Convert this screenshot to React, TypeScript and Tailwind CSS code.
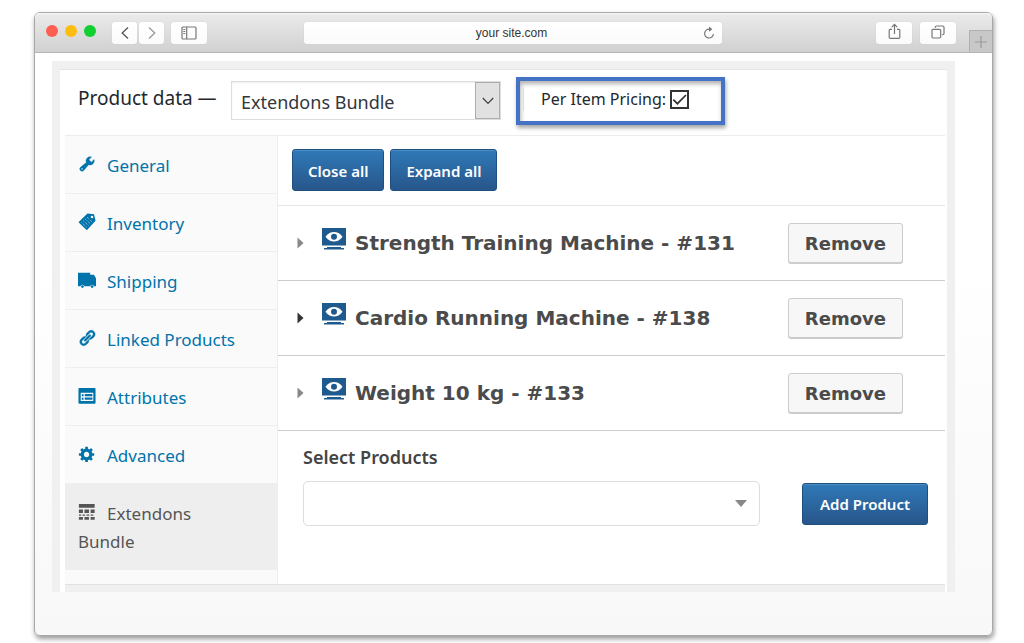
import type { ReactNode } from "react";
import { clsx } from "clsx";

const toolButton =
  "flex h-[22px] items-center justify-center rounded-[3px] bg-linear-to-b from-white to-[#fbfbfb] text-[#777] shadow-[0_0_1px_rgba(0,0,0,0.15)]";

const blueButton =
  "h-[42px] rounded-[3px] border border-[#1d4f80] bg-linear-to-b from-[#3079b8] to-[#27568a] pt-[2px] text-[15px] font-semibold whitespace-nowrap text-white shadow-[inset_0_1px_0_#4a8cc4]";

function Icon({ children }: { children: ReactNode }) {
  return (
    <svg viewBox="0 0 20 20" fill="currentColor" className="mt-[3px] mr-[11px] h-[18px] w-[18px] shrink-0" aria-hidden="true">
      {children}
    </svg>
  );
}

const WrenchIcon = () => (
  <Icon>
    <path d="M16.68 9.77c-1.34 1.34-3.3 1.67-4.95.99l-5.41 6.52c-.99.99-2.59.99-3.58 0s-.99-2.59 0-3.57l6.52-5.42c-.68-1.65-.35-3.61.99-4.95 1.28-1.28 3.12-1.62 4.72-1.06l-2.89 2.89 2.82 2.82 2.86-2.87c.53 1.58.18 3.39-1.08 4.65zM3.81 16.21c.4.39 1.04.39 1.43 0 .4-.4.4-1.04 0-1.43-.39-.4-1.03-.4-1.43 0-.39.39-.39 1.03 0 1.43z" stroke="currentColor" strokeWidth=".5" />
  </Icon>
);

const TagIcon = () => (
  <Icon>
    <path fillRule="evenodd" d="M10.500 .5 17.800 1.500 19.500 8.500 9.800 19.300 .5 10.200zM15.500 3a1.400 1.400 0 1 0 .1 2.800 1.400 1.400 0 0 0-.1-2.800z" />
    <path d="M10 4.500l6 5.800M8 6.500l6 5.800M6 8.500l6 5.800M4 10.500l6 5.800" stroke="#fafafa" strokeWidth=".8" strokeDasharray="1.100 1.100" />
  </Icon>
);

const TruckIcon = () => (
  <Icon>
    <path d="M0 2h13.5v2.2h4.2L20 8v9h-2a2.4 2.4 0 0 0-4.6 0H7.2a2.4 2.4 0 0 0-4.6 0H0z" />
    <circle cx="4.9" cy="17.3" r="1.5" />
    <circle cx="15.7" cy="17.3" r="1.5" />
  </Icon>
);

const LinkIcon = () => (
  <Icon>
    <path d="M17.74 2.76c1.68 1.69 1.68 4.41 0 6.1l-1.53 1.52c-1.12 1.12-2.7 1.47-4.14 1.09l2.62-2.61.76-.77.76-.76c.84-.84.84-2.2 0-3.04-.84-.85-2.2-.85-3.04 0l-.77.76-3.38 3.38c-.37-1.44-.02-3.02 1.1-4.14l1.52-1.53c1.69-1.68 4.42-1.68 6.1 0zM8.59 13.43l5.34-5.34c.42-.42.42-1.1 0-1.52-.44-.43-1.13-.39-1.53 0l-5.33 5.34c-.42.42-.42 1.1 0 1.52.44.43 1.13.39 1.52 0zm-.76 2.29l4.14-4.15c.38 1.44.03 3.02-1.09 4.14l-1.52 1.53c-1.69 1.68-4.41 1.68-6.1 0-1.68-1.68-1.68-4.42 0-6.1l1.53-1.52c1.12-1.12 2.7-1.47 4.14-1.1l-4.14 4.15c-.85.84-.85 2.2 0 3.05.84.84 2.2.84 3.04 0z" stroke="currentColor" strokeWidth=".5" />
  </Icon>
);

const FeedbackIcon = () => (
  <Icon>
    <path fillRule="evenodd" d="M1.500 1h17a1 1 0 0 1 1 1v15.500a1 1 0 0 1-1 1h-17a1 1 0 0 1-1-1V2a1 1 0 0 1 1-1zM3 6.500v9h14v-9z" />
    <path d="M4.200 8h2v2.200h-2zM7.500 7.800H16v2.500H7.500zM4.200 12h2v2.200h-2zM7.500 11.800H16v2.500H7.500z" />
  </Icon>
);

const GearIcon = () => (
  <Icon>
    <path d="M18 12h-2.18c-.17.7-.44 1.35-.81 1.93l1.54 1.54-2.1 2.1-1.54-1.54c-.58.36-1.23.63-1.91.79V19H8v-2.18c-.68-.16-1.33-.43-1.91-.79l-1.54 1.54-2.12-2.12 1.54-1.54c-.36-.58-.63-1.23-.79-1.91H1V9.03h2.17c.16-.7.44-1.35.8-1.94L2.43 5.55l2.1-2.1 1.54 1.54c.58-.37 1.24-.64 1.93-.81V2h3v2.18c.68.16 1.33.43 1.91.79l1.54-1.54 2.12 2.12-1.54 1.54c.36.59.64 1.24.8 1.94H18V12zm-8.5 1.5c1.66 0 3-1.34 3-3s-1.34-3-3-3-3 1.34-3 3 1.34 3 3 3z" />
  </Icon>
);

const TableIcon = () => (
  <Icon>
    <path d="M1 1h17.500v4.200H1zM1 7.200h4.500v4H1zM7.200 7.200h5v4h-5zM14 7.200h4.500v4H14zM1 12.700h2.500v1.500H1zM5 12.700h3v1.500H5zM9.500 12.700h3v1.500h-3zM14 12.700h3v1.500h-3zM1 15.500h4.500v3H1zM7.200 15.500h5v3h-5zM14 15.500h4.500v3H14z" />
  </Icon>
);

const tabs = [
  { icon: WrenchIcon, label: "General" },
  { icon: TagIcon, label: "Inventory" },
  { icon: TruckIcon, label: "Shipping" },
  { icon: LinkIcon, label: "Linked Products" },
  { icon: FeedbackIcon, label: "Attributes" },
  { icon: GearIcon, label: "Advanced" },
  { icon: TableIcon, label: "Extendons Bundle", active: true },
];

const products = [
  { id: 131, name: "Strength Training Machine" },
  { id: 138, name: "Cardio Running Machine", current: true },
  { id: 133, name: "Weight 10 kg" },
];

function BrowserBar() {
  return (
    <header className="flex h-[40px] items-center rounded-t-[5px] border-b border-[#b5b5b5] bg-linear-to-b from-[#ebebeb] to-[#d1d1d1] pl-[11px] shadow-[inset_0_1px_0_#f6f6f6]">
      <div className="flex gap-[7px] pb-[4px]">
        <span className="h-3 w-3 rounded-full bg-[#ff5f52]" />
        <span className="h-3 w-3 rounded-full bg-[#fdbc10]" />
        <span className="h-3 w-3 rounded-full bg-[#10cf30]" />
      </div>
      <div className="ml-[16px] flex gap-[2px]">
        <button type="button" aria-label="Back" className={clsx(toolButton, "w-[25px]")}>
          <svg viewBox="0 0 8 12" className="h-3 w-2" fill="none" stroke="#555" strokeWidth="1.3">
            <path d="M7 .5 1.2 6 7 11.5" />
          </svg>
        </button>
        <button type="button" aria-label="Forward" className={clsx(toolButton, "w-[25px]")}>
          <svg viewBox="0 0 8 12" className="h-3 w-2" fill="none" stroke="#999" strokeWidth="1.3">
            <path d="M1 .5 6.8 6 1 11.5" />
          </svg>
        </button>
      </div>
      <button type="button" aria-label="Toggle sidebar" className={clsx(toolButton, "ml-[7px] w-[36px]")}>
        <svg viewBox="0 0 16 14" className="h-[14px] w-4" fill="none" stroke="currentColor" strokeWidth="1.2">
          <rect x="1" y="1" width="14" height="12" rx="1" />
          <path d="M5.7 1v12M2.3 3.5h2M2.3 5.5h2M2.3 7.5h2" />
        </svg>
      </button>
      <div className={clsx(toolButton, "mr-[154px] ml-[97px] min-w-0 flex-1 pr-[7px]")}>
        <input
          aria-label="Address"
          defaultValue="your site.com"
          className="w-full min-w-0 flex-1 pl-[16px] text-center font-['Liberation_Sans',sans-serif] text-[12px] text-[#333] outline-none"
        />
        <button type="button" aria-label="Reload">
          <svg viewBox="0 0 12 14" className="h-[14px] w-3" fill="none" stroke="currentColor" strokeWidth="1.2">
            <path d="M6.5 3.2A4.4 4.4 0 1 0 10.4 8" />
            <path d="M6 .6 9.4 3.3 6 5.8z" fill="currentColor" stroke="none" />
          </svg>
        </button>
      </div>
      <button type="button" aria-label="Share" className={clsx(toolButton, "w-[36px]")}>
        <svg viewBox="0 0 13 17" className="mb-[2px] h-[17px] w-[13px]" fill="none" stroke="currentColor" strokeWidth="1.2">
          <path d="M4 6.3H2.2a1 1 0 0 0-1 1v7a1 1 0 0 0 1 1h8.6a1 1 0 0 0 1-1v-7a1 1 0 0 0-1-1H9M6.5 11V1.5M3.8 4.2l2.7-2.8 2.7 2.8" />
        </svg>
      </button>
      <button type="button" aria-label="Show tabs" className={clsx(toolButton, "ml-[8px] w-[36px]")}>
        <svg viewBox="0 0 14 14" className="mb-[1px] h-[14px] w-[14px]" fill="none" stroke="currentColor" strokeWidth="1.2">
          <rect x="1" y="4.3" width="8.7" height="8.7" rx="1.2" />
          <path d="M4.3 2.8V2.2c0-.7.4-1.2 1.1-1.2h6.4c.7 0 1.2.5 1.2 1.2v6.3c0 .7-.5 1.2-1.2 1.2h-.5" />
        </svg>
      </button>
      <button
        type="button"
        aria-label="New tab"
        className="ml-[13px] flex h-[22px] w-[23px] items-center justify-center self-end border-t border-l border-[#b0b0b0] bg-[#c8c8c8]"
      >
        <svg viewBox="0 0 12 12" className="h-3 w-3" stroke="#999" strokeWidth="1.2">
          <path d="M6 0v12M0 6h12" />
        </svg>
      </button>
    </header>
  );
}

function ProductDataHeader() {
  return (
    <div className="flex h-[67px] items-start border-b border-[#ececec] pl-[13px] text-[#23282d]">
      <label htmlFor="product-type" className="mt-[15px] w-[153px] text-[19px] leading-[28px] whitespace-nowrap">
        Product data —
      </label>
      <div className="mt-[12px] grid w-[270px] border border-[#ddd] bg-white shadow-[inset_0_1px_2px_rgba(0,0,0,0.07)]">
        <select
          id="product-type"
          className="col-start-1 row-start-1 h-[37px] appearance-none pt-[3px] pl-[9px] text-[18px] text-[#32373c] outline-none"
        >
          <option>Extendons Bundle</option>
        </select>
        <span className="pointer-events-none col-start-1 row-start-1 flex w-[25px] items-center justify-center justify-self-end border border-[#adadad] bg-[#e1e1e1]">
          <svg viewBox="0 0 12 8" className="h-2 w-3" fill="none" stroke="#444" strokeWidth="1.3">
            <path d="M.8 1 6 6.4 11.2 1" />
          </svg>
        </span>
      </div>
      <div className="mt-[8px] ml-[15px] flex h-[48px] w-[209px] items-start border-4 border-[#4472c4] pt-[6px] pl-[3px] shadow-[1px_3px_4px_rgba(0,0,0,0.35),inset_1px_3px_4px_rgba(0,0,0,0.3)]">
        <span className="h-[24px] border-l border-[#ddd]" />
        <label className="ml-[17px] flex items-center gap-[4px] text-[16px] leading-[24px] whitespace-nowrap">
          Per Item Pricing:
          <span className="grid">
            <input
              type="checkbox"
              defaultChecked
              className="peer col-start-1 row-start-1 h-[19px] w-[19px] appearance-none border-2 border-[#333] bg-white"
            />
            <svg
              viewBox="0 0 19 19"
              className="pointer-events-none invisible col-start-1 row-start-1 h-[19px] w-[19px] peer-checked:visible"
              fill="none"
              stroke="#333"
              strokeWidth="1.7"
            >
              <path d="M3.3 9.600 7.400 13.700 16 5" />
            </svg>
          </span>
        </label>
      </div>
    </div>
  );
}

function Sidebar() {
  return (
    <nav className="w-[213px] shrink-0 border-r border-[#eee] bg-[#fafafa] pb-[14px]">
      {tabs.map((tab) => (
        <a
          key={tab.label}
          href="#"
          className={clsx(
            "block border-b border-[#eee] pt-[16px] pb-[13px] pl-[13px] text-[17px] leading-[28px]",
            tab.active ? "bg-[#eee] text-[#555]" : "text-[#0073aa]"
          )}
        >
          <span className="float-left">
            <tab.icon />
          </span>
          {tab.active ? (
            <>
              Extendons
              <br />
              <span className="clear-left block">Bundle</span>
            </>
          ) : (
            tab.label
          )}
        </a>
      ))}
    </nav>
  );
}

function ProductRow({ id, name, current }: { id: number; name: string; current?: boolean }) {
  return (
    <li className="flex h-[75px] items-center border-b border-[#ccc] pr-[42px] pl-[19px] font-['DejaVu_Sans',Verdana,sans-serif] font-bold text-[#4b4b4b]">
      <svg viewBox="0 0 7 12" className={clsx("h-3 w-[7px]", current ? "text-[#333]" : "text-[#888]")} fill="currentColor">
        <path d="M.5.5 6.5 6l-6 5.5z" />
      </svg>
      <svg viewBox="0 0 24 22" className="mb-[9px] ml-[18px] h-[22px] w-6" aria-hidden="true">
        <path d="M0 0h24v17.500H0zM5 19h14v1h3v1.500H2V20h3z" fill="#1f5a8e" />
        <path d="M3.500 8.800C6 5.300 9 4 12 4s6 1.300 8.500 4.800C18 12.300 15 13.600 12 13.600S6 12.300 3.500 8.800z" fill="#fff" />
        <circle cx="12" cy="8.800" r="3" fill="#1f5a8e" />
      </svg>
      <h3 className="ml-[9px] flex-1 text-[20px] whitespace-nowrap">
        {name} - #{id}
      </h3>
      <button
        type="button"
        className="h-[40px] rounded-[3px] border border-[#ccc] bg-[#f7f7f7] px-4 text-[18px] shadow-[0_1px_0_#ccc]"
      >
        Remove
      </button>
    </li>
  );
}

export default function App() {
  return (
    <div className="bg-white pt-3 pr-[31px] pb-2 pl-[34px] font-['Noto_Sans','Open_Sans',sans-serif]">
      <div className="rounded-[6px] border border-[#a8a8a8] bg-linear-to-b from-white from-40% to-[#f8f8f8] shadow-[1px_3px_5px_rgba(0,0,0,0.4)]">
        <BrowserBar />
        <main className="pt-2 pr-[37px] pb-[43px] pl-[17px]">
          <div className="border-x-8 border-t-8 border-[#f0f0f0] bg-white pr-[2px] pl-[5px] shadow-[inset_0_1px_0_#e5e5e5]">
            <ProductDataHeader />
            <div className="flex">
              <Sidebar />
              <section className="min-w-0 flex-1">
                <div className="flex h-[70px] items-start gap-[6px] border-b border-[#e5e5e5] pt-[13px] pl-[14px]">
                  <button type="button" className={clsx(blueButton, "px-[15px]")}>
                    Close all
                  </button>
                  <button type="button" className={clsx(blueButton, "px-[15px]")}>
                    Expand all
                  </button>
                </div>
                <ul>
                  {products.map((product) => (
                    <ProductRow key={product.id} {...product} />
                  ))}
                </ul>
                <div className="pt-[12px] pr-[17px] pl-[25px]">
                  <label htmlFor="products" className="text-[18px] leading-[28px] font-semibold text-[#444]">
                    Select Products
                  </label>
                  <div className="mt-[10px] flex items-center gap-[42px]">
                    <div className="grid flex-1 rounded-[5px] border border-[#ddd] bg-white">
                      <select id="products" className="col-start-1 row-start-1 h-[43px] appearance-none px-3 outline-none">
                        <option value=""></option>
                      </select>
                      <svg
                        viewBox="0 0 12 7"
                        className="pointer-events-none col-start-1 row-start-1 mr-[12px] h-[7px] w-3 self-center justify-self-end"
                        fill="#888"
                      >
                        <path d="M0 0h12L6 7z" />
                      </svg>
                    </div>
                    <button type="button" className={clsx(blueButton, "px-[17px]")}>
                      Add Product
                    </button>
                  </div>
                </div>
              </section>
            </div>
            <div className="h-2 border-t border-[#e2e2e2] bg-[#f0f0f0]" />
          </div>
        </main>
      </div>
    </div>
  );
}
